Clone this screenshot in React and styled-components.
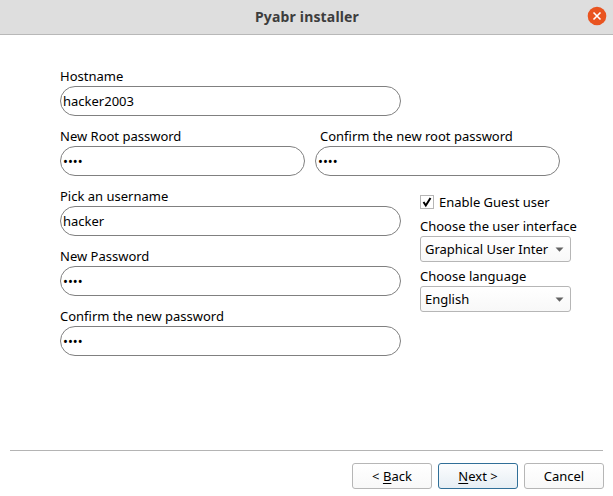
import React from 'react';
import styled, { createGlobalStyle } from 'styled-components';

const GlobalStyle = createGlobalStyle`
  *, *::before, *::after { box-sizing: border-box; }
  body {
    margin: 0;
    background: #fff;
    color: #000;
    font: 13px/20px "Noto Sans", sans-serif;
    overflow: hidden;
  }
`;

const Window = styled.main`
  display: flex;
  flex-direction: column;
  width: 613px;
  height: 496px;
  background: #fff;
`;

const TitleBar = styled.header`
  display: grid;
  grid-template-columns: 35px 1fr 35px;
  align-items: center;
  height: 35px;
  background: #dedede;
  border-bottom: 1px solid #b8b8b8;
`;

const Title = styled.h1`
  grid-column: 2;
  margin: 0;
  padding: 0 0 1px 1px;
  text-align: center;
  font-size: 14px;
  line-height: 20px;
  font-weight: 700;
  letter-spacing: 0.17px;
  color: #3d3d3d;
`;

const CloseButton = styled.button`
  display: flex;
  width: 20px;
  height: 20px;
  margin: 0 0 2px 9px;
  padding: 0;
  border: 0;
  background: none;
`;

const Form = styled.form`
  display: flex;
  flex-direction: column;
  gap: 10px;
  flex: 1;
  padding: 31px 0 0 60px;
`;

const Row = styled.div`
  display: flex;
  gap: ${(p) => p.$gap}px;
`;

const Stack = styled.div`
  display: flex;
  flex-direction: column;
  gap: 10px;
`;

const FieldBox = styled.label`
  display: flex;
  flex-direction: column;
  width: ${(p) => p.$width}px;
`;

const Caption = styled.span`
  height: 20px;
  padding-left: ${(p) => p.$indent || 0}px;
  white-space: nowrap;
`;

const Value = styled.span`
  display: flex;
  align-items: center;
  height: 30px;
  padding: 0 2px;
  border: 1px solid #808080;
  border-radius: 15px;
  background: #fff;
`;

const Options = styled.aside`
  display: flex;
  flex-direction: column;
  gap: 10px;
  width: 160px;
`;

const CheckRow = styled.label`
  display: flex;
  align-items: center;
  gap: 5px;
  height: 20px;
  margin: 6px 0 -6px;
`;

const CheckBox = styled.span`
  display: flex;
  width: 14px;
  height: 14px;
  margin-top: -1px;
  border: 1px solid #b6b6b6;
  background: #fff;
`;

const Choice = styled.div`
  display: flex;
  flex-direction: column;
  height: 40px;
`;

const SelectBox = styled.div`
  display: flex;
  align-items: center;
  justify-content: space-between;
  flex: none;
  width: 151px;
  height: 26px;
  padding: 0 6px 0 4px;
  border: 1px solid #b6b6b6;
  border-radius: 3px;
  background: linear-gradient(#fff, #f8f8f8);
  white-space: nowrap;
`;

const Footer = styled.footer`
  height: 46px;
  margin: 0 9px 0 10px;
`;

const Divider = styled.hr`
  width: 593px;
  height: 1px;
  margin: 0;
  border: 0;
  background: #b4b4b4;
`;

const Buttons = styled.div`
  display: flex;
  justify-content: flex-end;
  gap: 6px;
  padding-top: 12px;
`;

const Button = styled.button`
  width: 80px;
  height: 26px;
  padding: 0;
  border: 1px solid ${(p) => (p.$primary ? '#306f98' : '#b6b6b6')};
  border-radius: 3px;
  background: ${(p) => (p.$primary ? 'linear-gradient(#fcfdfe, #e6eef4)' : 'linear-gradient(#fff, #f8f8f8)')};
  color: #000;
  font: inherit;
`;

const Mnemonic = styled.span`
  text-decoration: underline;
  text-decoration-skip-ink: none;
  text-underline-offset: 2px;
  text-decoration-thickness: 1px;
`;

function Field({ label, value, width = 341, indent }) {
  return (
    <FieldBox $width={width}>
      <Caption $indent={indent}>{label}</Caption>
      <Value>{value}</Value>
    </FieldBox>
  );
}

function Select({ label, value }) {
  return (
    <Choice>
      <Caption>{label}</Caption>
      <SelectBox>
        <span>{value}</span>
        <svg width="9" height="5" viewBox="0 0 9 5">
          <path d="M0.5 0.5h8L4.5 4.7z" fill="#626262" />
        </svg>
      </SelectBox>
    </Choice>
  );
}

export default function App() {
  return (
    <>
      <GlobalStyle />
      <Window>
        <TitleBar>
          <Title>Pyabr installer</Title>
          <CloseButton type="button" aria-label="Close">
            <svg width="20" height="20" viewBox="0 0 20 20">
              <circle cx="10" cy="10" r="9.3" fill="#e95420" />
              <path d="M6.5 6.5l7 7M13.5 6.5l-7 7" stroke="#fff" strokeWidth="1.6" />
            </svg>
          </CloseButton>
        </TitleBar>
        <Form>
          <Field label="Hostname" value="hacker2003" />
          <Row $gap={10}>
            <Field label="New Root password" value="••••" width={245} />
            <Field label="Confirm the new root password" value="••••" width={245} indent={5} />
          </Row>
          <Row $gap={19}>
            <Stack>
              <Field label="Pick an username" value="hacker" />
              <Field label="New Password" value="••••" />
              <Field label="Confirm the new password" value="••••" />
            </Stack>
            <Options>
              <CheckRow>
                <CheckBox>
                  <svg width="12" height="12" viewBox="0 0 12 12">
                    <path d="M2.5 6l2.3 3.5L9.5 2" fill="none" stroke="#000" strokeWidth="2" />
                  </svg>
                </CheckBox>
                Enable Guest user
              </CheckRow>
              <Select label="Choose the user interface" value="Graphical User Inter" />
              <Select label="Choose language" value="English" />
            </Options>
          </Row>
        </Form>
        <Footer>
          <Divider />
          <Buttons>
            <Button type="button">&lt; <Mnemonic>B</Mnemonic>ack</Button>
            <Button type="button" $primary><Mnemonic>N</Mnemonic>ext &gt;</Button>
            <Button type="button">Cancel</Button>
          </Buttons>
        </Footer>
      </Window>
    </>
  );
}
